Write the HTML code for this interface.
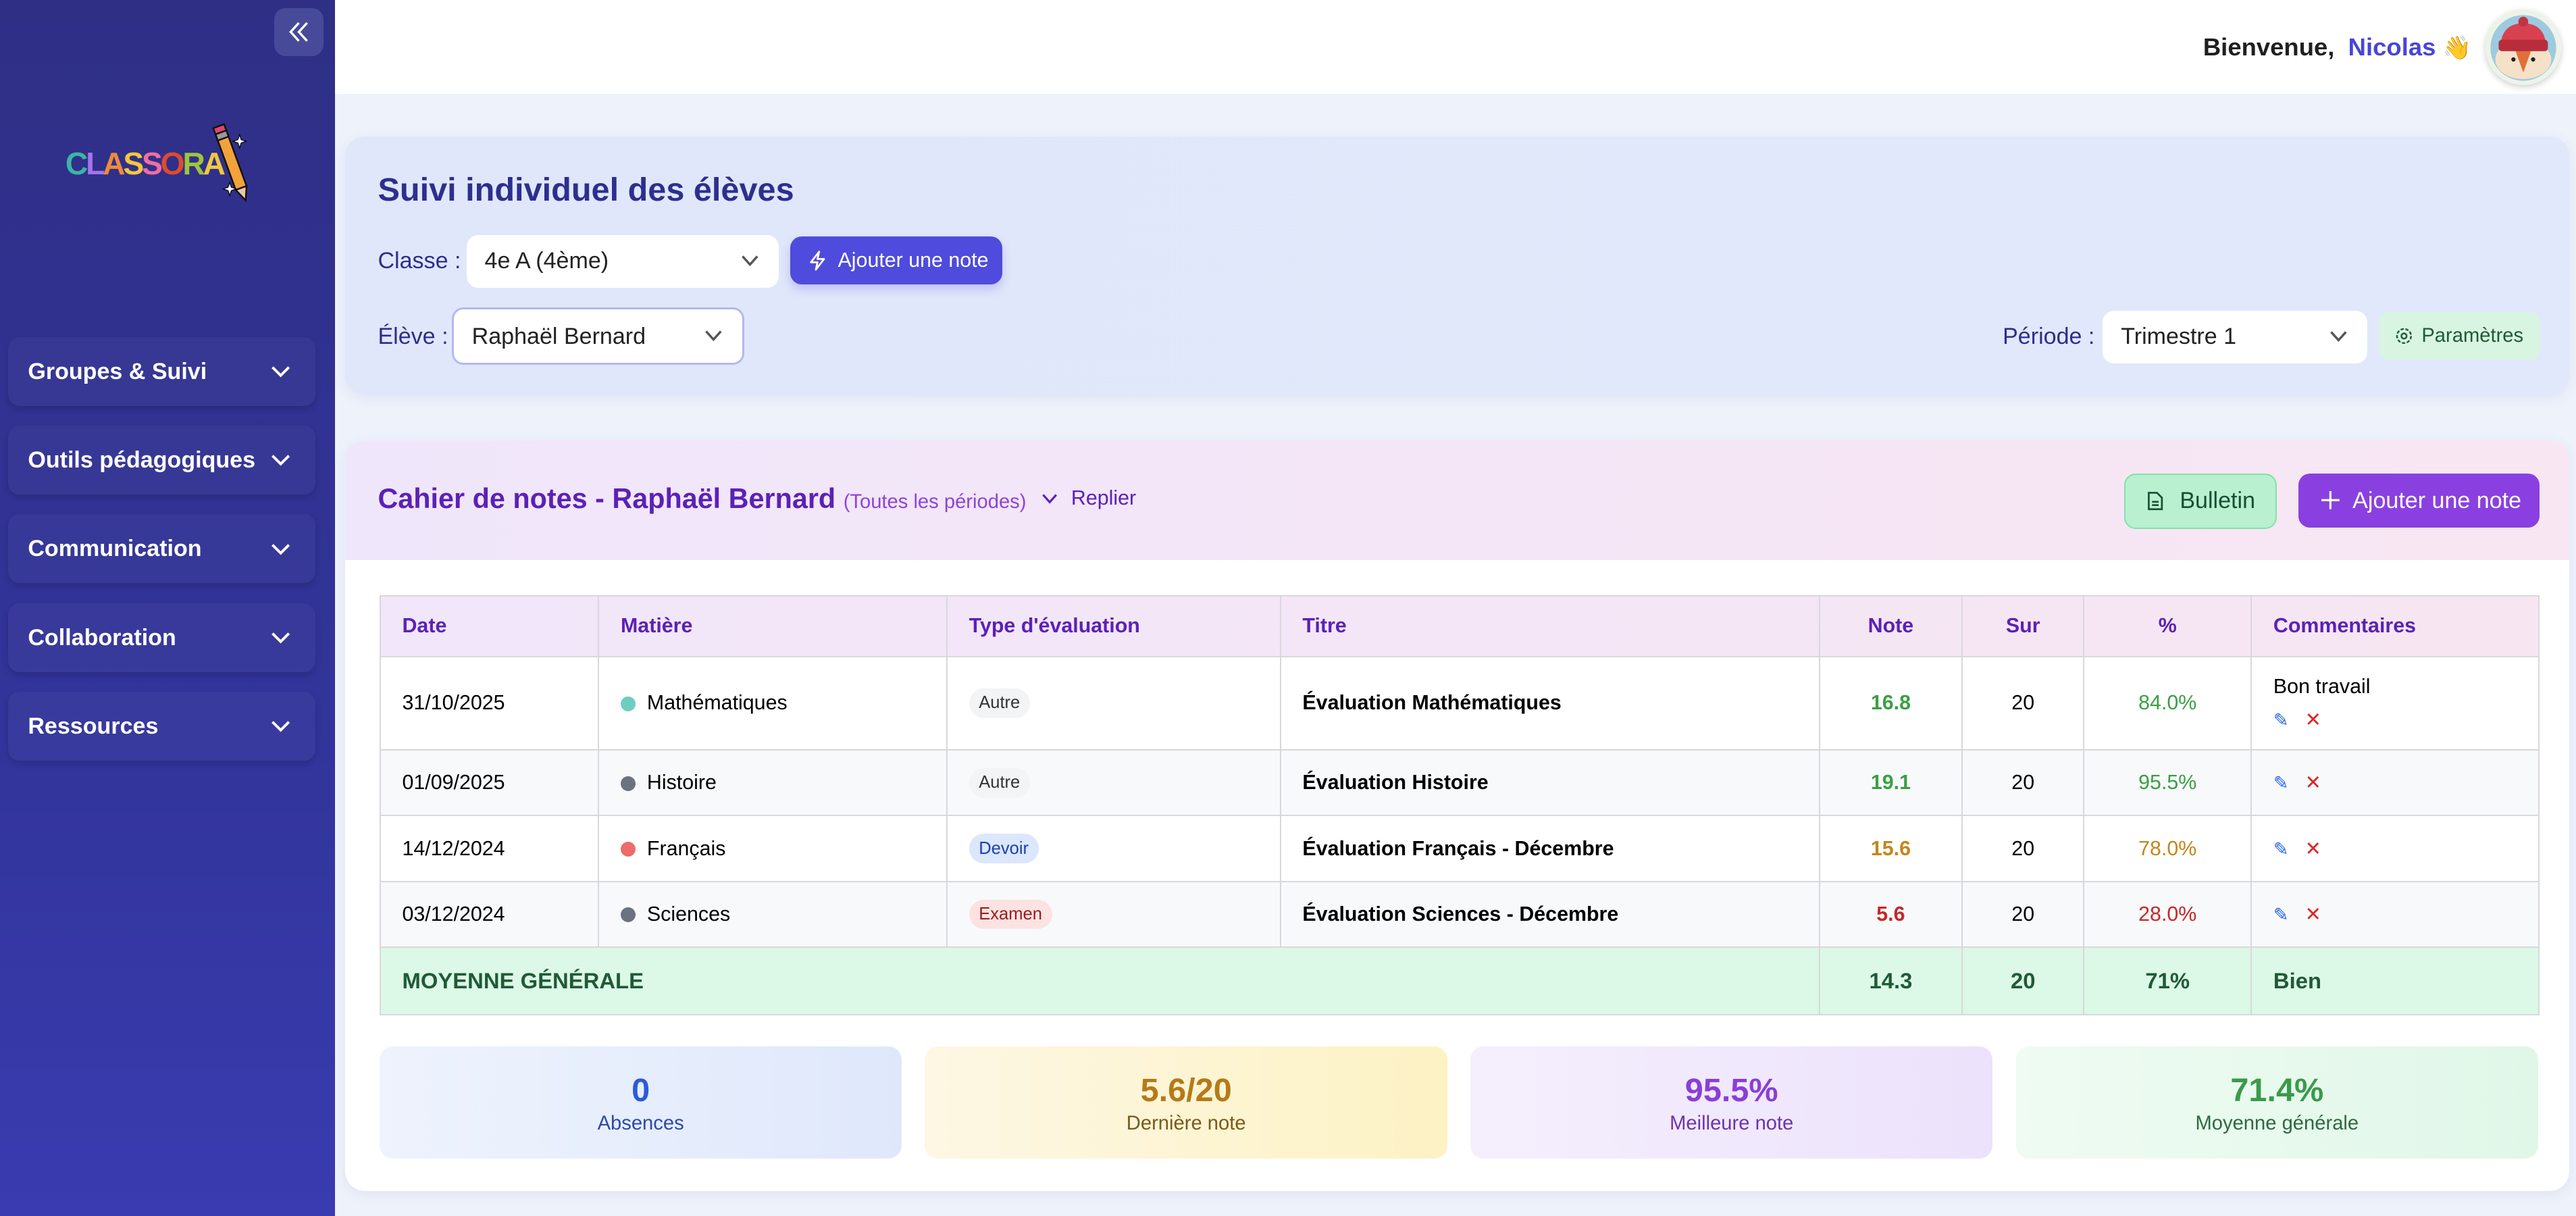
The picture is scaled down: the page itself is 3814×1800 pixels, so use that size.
<!DOCTYPE html>
<html><head><meta charset="utf-8">
<style>
*{box-sizing:border-box;margin:0;padding:0}
html,body{width:3814px;height:1800px;overflow:hidden}
body{font-family:"Liberation Sans",sans-serif;background:#eef2fb}
#root{zoom:2.4324;width:1568px;height:740px;position:relative;overflow:hidden;background:#eef2fb}
.abs{position:absolute}
.side{left:0;top:0;width:204px;height:740px;background:linear-gradient(180deg,#2f2f86 0%,#32349a 60%,#3a3bb0 100%)}
.coll{left:167px;top:5px;width:30px;height:29px;border-radius:7px;background:#474a98;color:#fff}
.nav{left:5px;width:187px;height:42px;border-radius:7px;background:rgba(255,255,255,0.03);box-shadow:0 2px 4px rgba(0,0,0,0.15);color:#fff;font-weight:bold;font-size:14px;line-height:42px;padding-left:12px}
.nav svg{position:absolute;right:15px;top:17px}
.hdr{left:204px;top:0;width:1364px;height:57px;background:#fff}
.card1{left:210px;top:83px;width:1354px;height:157px;border-radius:12px;background:linear-gradient(90deg,#e0e7fa,#e1e8fb);box-shadow:0 2px 8px rgba(60,70,140,0.08)}
.lbl{color:#2e2e8a;font-size:14px}
.sel{background:#fff;border-radius:7px;font-size:14px;color:#222;padding-left:11px}
.sel svg{position:absolute;right:12px;top:50%;margin-top:-4px}
.card2{left:210px;top:268px;width:1354px;height:457px;border-radius:12px;background:#fff;box-shadow:0 2px 8px rgba(60,70,140,0.08);overflow:hidden}
table{border-collapse:collapse;position:absolute;left:21px;top:94px;width:1315px;font-size:12.5px}
td,th{border:1px solid #d8d8dc;padding:0 13px;text-align:left}
th{height:37px;color:#5b21b6;font-weight:bold;font-size:12.5px}
thead tr{background:linear-gradient(90deg,#f1e6fa,#f7e6f2)}
.c{text-align:center}
.dot{display:inline-block;width:9px;height:9px;border-radius:50%;margin-left:9px;margin-right:7px;vertical-align:-1px}
.tag{display:inline-block;font-size:10.5px;padding:3px 6px;border-radius:9px;background:#f3f4f6;color:#333}
.g{color:#3aa043;font-weight:bold}.o{color:#c4861c;font-weight:bold}.r{color:#c62828;font-weight:bold}
.stat{top:637px;width:318px;height:68px;border-radius:8px;text-align:center}
.stat b{display:block;font-size:20px;margin-top:15px}
.stat span{display:block;font-size:12px;margin-top:2px}
</style></head><body><div id="root">

<div class="abs hdr"></div>
<div class="abs" style="left:1341px;top:20px;font-size:15px;font-weight:bold;color:#1f1f1f">Bienvenue,&nbsp; <span style="color:#4845d8">Nicolas</span> <span style="font-size:14px">👋</span></div>
<div class="abs" style="left:1513px;top:6px;width:46px;height:46px;border-radius:50%;background:#eef3e8;box-shadow:0 1px 4px rgba(0,0,0,0.2)">
<svg width="46" height="46" viewBox="0 0 46 46"><circle cx="23" cy="23" r="20" fill="#9ccbe0"/><ellipse cx="23" cy="30" rx="17" ry="12" fill="#f5e1c8"/><path d="M18 24 L23 38 L28 24Z" fill="#e07038"/><circle cx="17" cy="30" r="1.3" fill="#222"/><circle cx="29" cy="30" r="1.3" fill="#222"/><path d="M9 22 Q10 8 23 8 Q36 8 37 22Z" fill="#d8414f"/><rect x="8" y="18" width="30" height="7" rx="2" fill="#b82c3b"/><circle cx="23" cy="7" r="3" fill="#c43344"/></svg></div>

<div class="abs side"></div>
<div class="abs coll"><svg width="30" height="29" viewBox="0 0 30 29"><path d="M15 9 L10 14.5 L15 20 M20 9 L15 14.5 L20 20" stroke="#fff" stroke-width="1.4" fill="none"/></svg></div>
<div class="abs" style="left:38px;top:74px;width:120px;height:55px">
<svg width="120" height="55" viewBox="0 0 120 55">
<text x="2" y="32" font-family="Liberation Sans" font-weight="bold" font-size="19" letter-spacing="-1.3"><tspan fill="#3bb5a5">C</tspan><tspan fill="#a474e8">L</tspan><tspan fill="#ef8a3a">A</tspan><tspan fill="#f1c73c">S</tspan><tspan fill="#ef6f9e">S</tspan><tspan fill="#e04a2e">O</tspan><tspan fill="#9ec53a">R</tspan><tspan fill="#f0c840">A</tspan></text>
<g transform="translate(92,4) rotate(-20)"><rect x="0" y="0" width="7" height="40" fill="#f2a23c" stroke="#111" stroke-width="1"/><rect x="0" y="0" width="7" height="4" fill="#e04570" stroke="#111" stroke-width="1"/><rect x="0" y="4" width="7" height="4" fill="#999" stroke="#111" stroke-width="1"/><path d="M0 40 L3.5 48 L7 40Z" fill="#e8c9a6" stroke="#111" stroke-width="1"/></g>
<path d="M108 8 l1 3 3 1 -3 1 -1 3 -1 -3 -3 -1 3 -1z M102 37 l1 3 3 1 -3 1 -1 3 -1 -3 -3 -1 3 -1z" fill="#fff" stroke="#000" stroke-width="0.5"/>
</svg></div>
<div class="abs nav" style="top:205px">Groupes &amp; Suivi<svg width="12" height="8" viewBox="0 0 12 8"><path d="M1 1.5 L6 6.5 L11 1.5" stroke="#fff" stroke-width="1.6" fill="none"/></svg></div>
<div class="abs nav" style="top:259px">Outils pédagogiques<svg width="12" height="8" viewBox="0 0 12 8"><path d="M1 1.5 L6 6.5 L11 1.5" stroke="#fff" stroke-width="1.6" fill="none"/></svg></div>
<div class="abs nav" style="top:313px">Communication<svg width="12" height="8" viewBox="0 0 12 8"><path d="M1 1.5 L6 6.5 L11 1.5" stroke="#fff" stroke-width="1.6" fill="none"/></svg></div>
<div class="abs nav" style="top:367px">Collaboration<svg width="12" height="8" viewBox="0 0 12 8"><path d="M1 1.5 L6 6.5 L11 1.5" stroke="#fff" stroke-width="1.6" fill="none"/></svg></div>
<div class="abs nav" style="top:421px">Ressources<svg width="12" height="8" viewBox="0 0 12 8"><path d="M1 1.5 L6 6.5 L11 1.5" stroke="#fff" stroke-width="1.6" fill="none"/></svg></div>

<div class="abs card1"></div>
<div class="abs" style="left:230px;top:104px;font-size:20px;font-weight:bold;color:#2e2e8f">Suivi individuel des élèves</div>
<div class="abs lbl" style="left:230px;top:151px">Classe :</div>
<div class="abs sel" style="left:284px;top:143px;width:190px;height:32px;line-height:32px">4e A (4ème)<svg width="11" height="7" viewBox="0 0 11 7"><path d="M1 1 L5.5 6 L10 1" stroke="#555" stroke-width="1.4" fill="none"/></svg></div>
<div class="abs" style="left:481px;top:144px;width:129px;height:29px;border-radius:7px;background:#4f4bdc;color:#fff;font-size:12.5px;line-height:29px;padding-left:29px;box-shadow:0 3px 6px rgba(79,75,220,0.25)"><svg class="abs" style="left:11px;top:8px" width="11" height="13" viewBox="0 0 11 13"><path d="M6.5 1 L1.5 7.5 L5.5 7.5 L4.5 12 L9.5 5.5 L5.5 5.5Z" stroke="#fff" stroke-width="1.1" fill="none" stroke-linejoin="round"/></svg>Ajouter une note</div>
<div class="abs lbl" style="left:230px;top:197px">Élève :</div>
<div class="abs sel" style="left:275px;top:187px;width:178px;height:35px;line-height:33px;border:1.5px solid #b4b8f0">Raphaël Bernard<svg width="11" height="7" viewBox="0 0 11 7"><path d="M1 1 L5.5 6 L10 1" stroke="#555" stroke-width="1.4" fill="none"/></svg></div>
<div class="abs lbl" style="left:1219px;top:197px">Période :</div>
<div class="abs sel" style="left:1280px;top:189px;width:161px;height:32px;line-height:32px">Trimestre 1<svg width="11" height="7" viewBox="0 0 11 7"><path d="M1 1 L5.5 6 L10 1" stroke="#555" stroke-width="1.4" fill="none"/></svg></div>
<div class="abs" style="left:1448px;top:190px;width:98px;height:29px;border-radius:6px;background:#d8f5e2;color:#1f5a36;font-size:12px;line-height:29px;padding-left:26px"><svg class="abs" style="left:10px;top:9px" width="11" height="11" viewBox="0 0 11 11"><circle cx="5.5" cy="5.5" r="4.3" stroke="#1f5a36" stroke-width="1" fill="none" stroke-dasharray="2 1"/><circle cx="5.5" cy="5.5" r="1.6" stroke="#1f5a36" stroke-width="1" fill="none"/></svg>Paramètres</div>

<div class="abs card2">
<div class="abs" style="left:0;top:0;width:1354px;height:73px;background:linear-gradient(90deg,#f0e6fb,#f8e6f2)"></div>
<div class="abs" style="left:20px;top:26px;font-size:17px;font-weight:bold;color:#5b21b6;white-space:nowrap">Cahier de notes - Raphaël Bernard <span style="font-size:12px;font-weight:normal;color:#8e44d6">(Toutes les périodes)</span></div>
<div class="abs" style="left:424px;top:28px;font-size:12.5px;color:#5b21b6"><svg width="10" height="7" viewBox="0 0 10 7" style="margin-right:8px"><path d="M1 1 L5 5.5 L9 1" stroke="#5b21b6" stroke-width="1.3" fill="none"/></svg>Replier</div>
<div class="abs" style="left:1083px;top:20px;width:93px;height:34px;border-radius:7px;background:#b8f0d0;border:1px solid #86dfab;color:#1a4d33;font-size:14px;line-height:32px;padding-left:33px"><svg class="abs" style="left:13px;top:10px" width="10" height="12" viewBox="0 0 10 12"><path d="M1 1 H6 L9 4 V11 H1Z M3 6.5 H7 M3 8.5 H7" stroke="#1a4d33" stroke-width="1.1" fill="none"/></svg>Bulletin</div>
<div class="abs" style="left:1189px;top:20px;width:147px;height:33px;border-radius:7px;background:#8a40e0;color:#fff;font-size:14px;line-height:33px;padding-left:33px"><svg class="abs" style="left:14px;top:11px" width="11" height="11" viewBox="0 0 11 11"><path d="M5.5 0 V11 M0 5.5 H11" stroke="#fff" stroke-width="1.3"/></svg>Ajouter une note</div>
<table>
<colgroup><col style="width:133px"><col style="width:212px"><col style="width:203px"><col style="width:328px"><col style="width:87px"><col style="width:74px"><col style="width:102px"><col></colgroup>
<thead><tr><th>Date</th><th>Matière</th><th>Type d'évaluation</th><th>Titre</th><th class="c">Note</th><th class="c">Sur</th><th class="c">%</th><th>Commentaires</th></tr></thead>
<tbody>
<tr style="height:57px"><td>31/10/2025</td><td style="padding-left:4px"><span class="dot" style="background:#6fcdbf"></span>Mathématiques</td><td><span class="tag">Autre</span></td><td><b>Évaluation Mathématiques</b></td><td class="c g">16.8</td><td class="c">20</td><td class="c g" style="font-weight:normal">84.0%</td><td>Bon travail<br><span style="display:inline-block;margin-top:7px;color:#2563eb;font-size:11px">✎</span><span style="color:#dc2626;margin-left:10px;font-size:12px">✕</span></td></tr>
<tr style="height:40px;background:#f8f9fb"><td>01/09/2025</td><td style="padding-left:4px"><span class="dot" style="background:#6b7280"></span>Histoire</td><td><span class="tag">Autre</span></td><td><b>Évaluation Histoire</b></td><td class="c g">19.1</td><td class="c">20</td><td class="c g" style="font-weight:normal">95.5%</td><td><span style="color:#2563eb;font-size:11px">✎</span><span style="color:#dc2626;margin-left:10px;font-size:12px">✕</span></td></tr>
<tr style="height:40px"><td>14/12/2024</td><td style="padding-left:4px"><span class="dot" style="background:#ec6b6b"></span>Français</td><td><span class="tag" style="background:#dbe7fd;color:#1e40af">Devoir</span></td><td><b>Évaluation Français - Décembre</b></td><td class="c o">15.6</td><td class="c">20</td><td class="c o" style="font-weight:normal">78.0%</td><td><span style="color:#2563eb;font-size:11px">✎</span><span style="color:#dc2626;margin-left:10px;font-size:12px">✕</span></td></tr>
<tr style="height:40px;background:#f8f9fb"><td>03/12/2024</td><td style="padding-left:4px"><span class="dot" style="background:#6b7280"></span>Sciences</td><td><span class="tag" style="background:#fde2e2;color:#991b1b">Examen</span></td><td><b>Évaluation Sciences - Décembre</b></td><td class="c r">5.6</td><td class="c">20</td><td class="c r" style="font-weight:normal">28.0%</td><td><span style="color:#2563eb;font-size:11px">✎</span><span style="color:#dc2626;margin-left:10px;font-size:12px">✕</span></td></tr>
<tr style="height:41px;background:#dcf8e6;color:#1f5a36;font-weight:bold;font-size:13.5px"><td colspan="4">MOYENNE GÉNÉRALE</td><td class="c">14.3</td><td class="c">20</td><td class="c">71%</td><td>Bien</td></tr>
</tbody></table>
</div>

<div class="abs stat" style="left:231px;background:linear-gradient(90deg,#eef3fd,#dfe8fb)"><b style="color:#2d5bd8">0</b><span style="color:#2d4aa8">Absences</span></div>
<div class="abs stat" style="left:563px;background:linear-gradient(90deg,#fdf7e4,#fdf2c4)"><b style="color:#b57a18">5.6/20</b><span style="color:#7a5a1a">Dernière note</span></div>
<div class="abs stat" style="left:895px;background:linear-gradient(90deg,#f5effd,#ece2fb)"><b style="color:#8a3ed8">95.5%</b><span style="color:#6b35a8">Meilleure note</span></div>
<div class="abs stat" style="left:1227px;background:linear-gradient(90deg,#effbf3,#e0f7e8)"><b style="color:#3a9a4a">71.4%</b><span style="color:#2e6a3e">Moyenne générale</span></div>

</div></body></html>
